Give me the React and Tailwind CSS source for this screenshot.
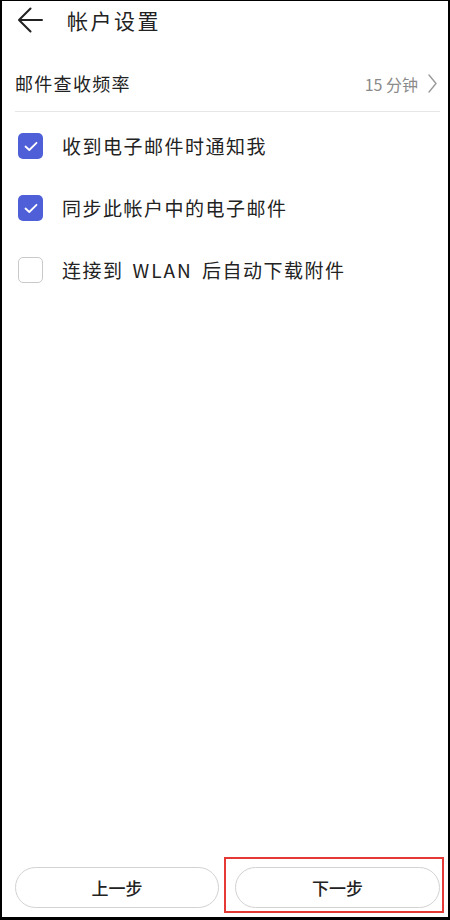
const items = [
  { label: ['收到电子邮件时通知我'], checked: true },
  { label: ['同步此帐户中的电子邮件'], checked: true },
  { label: ['连接到', 'WLAN', '后自动下载附件'], checked: false },
];

function CheckBox({ checked }) {
  if (!checked) {
    return <div className="w-[25px] h-[26px] rounded-[5px] border-[1.5px] border-[#c9c9c9] bg-white shrink-0" />;
  }
  return (
    <div className="w-[25px] h-[26px] rounded-[5px] bg-[#4f5fd8] flex items-center justify-center shrink-0">
      <svg width="14" height="11" viewBox="0 0 14 11" fill="none">
        <path d="M1.5 5.5 L5.3 9 L12.5 1.8" stroke="white" strokeWidth="1.8" strokeLinecap="round" strokeLinejoin="round" />
      </svg>
    </div>
  );
}

export default function App() {
  return (
    <div
      className="w-[450px] h-[920px] bg-white border-t border-x-2 border-b-[3px] border-black flex flex-col text-[#222]"
      style={{ fontFamily: '"Noto Sans CJK SC", "Noto Sans", sans-serif' }}
    >
      <div className="h-[38px] flex items-center pl-[16px]">
        <svg width="25" height="26" viewBox="0 0 25 26" fill="none">
          <path d="M1 13 H24 M12.5 1.5 L1 13 L12.5 24.5" stroke="#222" strokeWidth="2" strokeLinecap="round" strokeLinejoin="round" />
        </svg>
        <span className="ml-[24px] text-[21px] tracking-[2.5px] leading-none">帐户设置</span>
      </div>

      <div className="mt-[17px] mx-[13px] mr-[8px] h-[56px] flex items-center justify-between border-b border-[#e6e6e6]">
        <span className="text-[18px] tracking-[1.3px]">邮件查收频率</span>
        <div className="flex items-center gap-[10px] pr-[3px]">
          <span className="text-[16px] text-[#8a8a8a]">15 分钟</span>
          <svg width="9" height="19" viewBox="0 0 9 19" fill="none">
            <path d="M1 1 L8 9.5 L1 18" stroke="#9a9a9a" strokeWidth="1.4" strokeLinecap="round" strokeLinejoin="round" />
          </svg>
        </div>
      </div>

      <div className="pt-[3px]">
        {items.map((it) => (
          <div key={it.label.join('')} className="h-[62px] flex items-center pl-[16px] gap-[19px]">
            <CheckBox checked={it.checked} />
            <span className="text-[19px] tracking-[1.5px]">
              {it.label.length === 1 ? (
                it.label[0]
              ) : (
                <>
                  {it.label[0]}
                  <span className="mx-[9px] tracking-[2px]">{it.label[1]}</span>
                  {it.label[2]}
                </>
              )}
            </span>
          </div>
        ))}
      </div>

      <div className="flex-1" />

      <div className="flex items-end pl-[13px] pb-[4px]">
        <button className="w-[204px] h-[41px] mb-[5px] rounded-full border border-[#d2d2d2] bg-white text-[17px] font-medium text-[#222]">
          上一步
        </button>
        <div className="ml-[5px] w-[220px] h-[56px] border-2 border-[#e53935] pl-[9px] pt-[8px]">
          <button className="w-[205px] h-[41px] rounded-full border border-[#d2d2d2] bg-white text-[17px] font-medium text-[#222]">
            下一步
          </button>
        </div>
      </div>
    </div>
  );
}
